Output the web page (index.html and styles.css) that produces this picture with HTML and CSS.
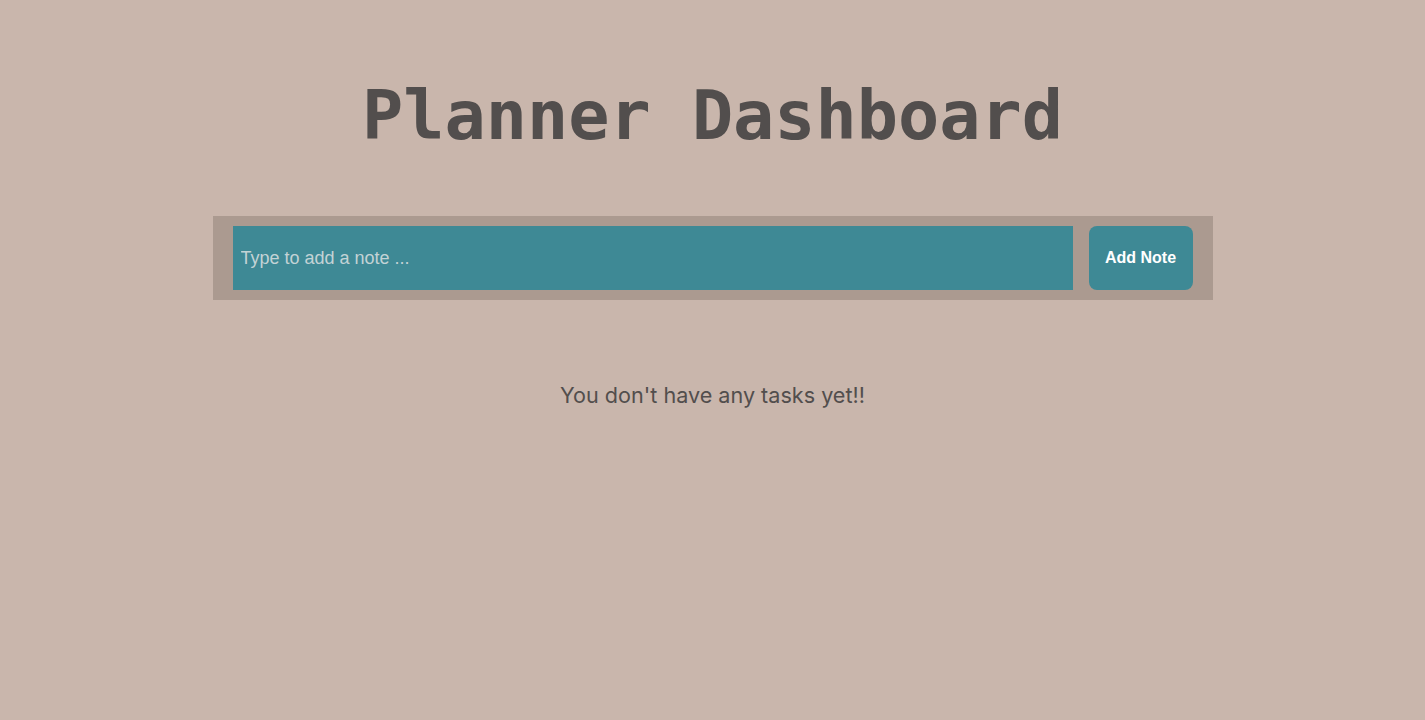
FILE: index.html
```html
<!DOCTYPE html>
<html lang="en">
<head>
<meta charset="utf-8">
<title>Planner Dashboard</title>
<link rel="stylesheet" href="styles.css">
</head>
<body>
<main class="app">
  <h1 class="title">Planner Dashboard</h1>
  <form class="note-form">
    <input class="note-input" type="text" placeholder="Type to add a note ...">
    <button class="add-btn" type="button">Add Note</button>
  </form>
  <p class="empty">You don't have any tasks yet!!</p>
</main>
</body>
</html>
```
FILE: styles.css
```css
html, body {
  margin: 0;
  padding: 0;
  background: #c9b6ac;
  height: 100%;
}
.app {
  display: flex;
  flex-direction: column;
  align-items: center;
  padding-top: 70px;
}
.title {
  margin: 0;
  font-family: "DejaVu Sans Mono", monospace;
  font-weight: bold;
  font-size: 68.5px;
  line-height: 90px;
  color: #524e4d;
}
.note-form {
  margin-top: 56px;
  width: 1000px;
  box-sizing: border-box;
  background: #ab9a90;
  padding: 10px 20px;
  display: flex;
  gap: 16px;
}
.note-input {
  flex: 1;
  height: 64px;
  box-sizing: border-box;
  border: none;
  outline: none;
  background: #3e8995;
  padding: 0 8px;
  font-family: "Liberation Sans", Arial, sans-serif;
  font-size: 18px;
  color: #fff;
}
.note-input::placeholder {
  color: #c3d3d5;
}
.add-btn {
  width: 104px;
  height: 64px;
  padding: 0;
  border: none;
  border-radius: 8px;
  background: #3e8995;
  color: #fff;
  font-family: "Liberation Sans", Arial, sans-serif;
  font-weight: bold;
  font-size: 16px;
  cursor: pointer;
}
.empty {
  margin: 82px 0 0;
  font-family: Inter, "Noto Sans", sans-serif;
  font-size: 21.6px;
  line-height: 26px;
  color: #524e4d;
}
```
